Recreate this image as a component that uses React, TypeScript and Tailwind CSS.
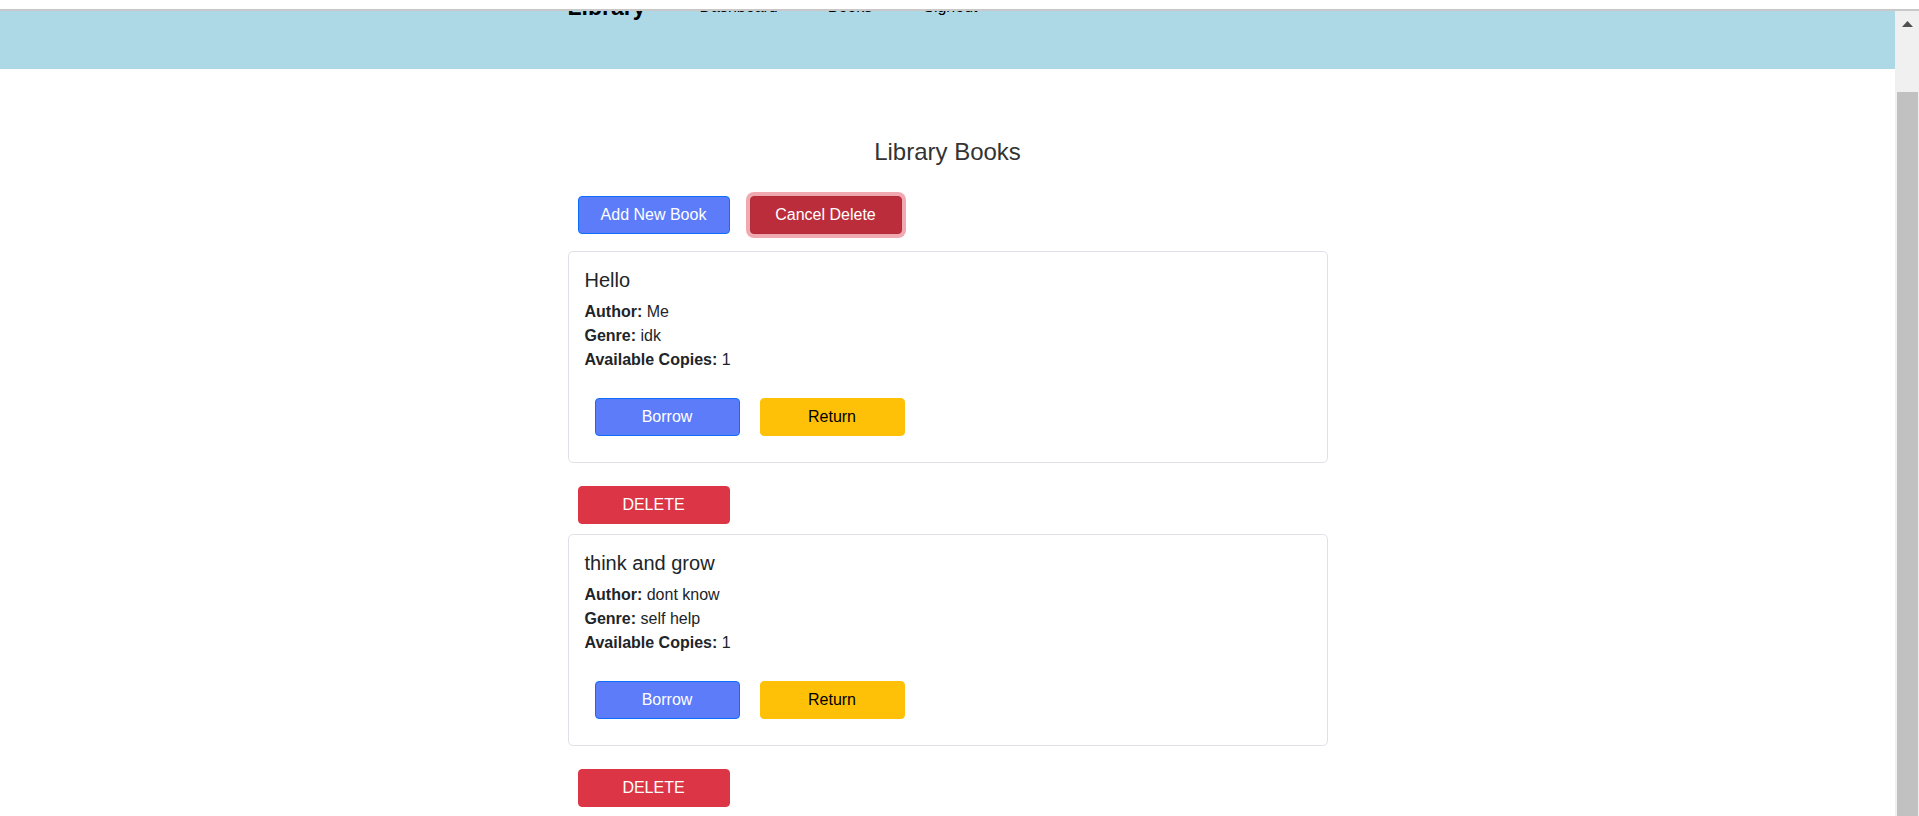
const books = [
  { title: "Hello", author: "Me", genre: "idk", copies: 1 },
  { title: "think and grow", author: "dont know", genre: "self help", copies: 1 },
];

const Navbar = () => {
  return (
    <nav className="h-[58px] overflow-hidden bg-[#add8e6]">
      <div className="mx-auto flex w-[760px] items-start text-black">
        <span className="-mt-[18px] text-[23px] font-bold leading-[28px]">Library</span>
        <a href="#" className="-mt-[16px] ml-[54px] text-[16px] leading-[24px]">
          Dashboard
        </a>
        <a href="#" className="-mt-[16px] ml-[50px] text-[16px] leading-[24px]">
          Books
        </a>
        <a href="#" className="-mt-[16px] ml-[51px] text-[16px] leading-[24px]">
          Signout
        </a>
      </div>
    </nav>
  );
};

const BookCard = ({ book }: { book: (typeof books)[number] }) => {
  return (
    <>
      <div className="mb-[13px] rounded-[5px] border border-[#dee2e6] p-[16px] text-[#212529]">
        <h5 className="mb-[8px] text-[20px] leading-[24px]">{book.title}</h5>
        <div className="mb-[16px] text-[16px] leading-[24px]">
          <div>
            <b>Author:</b> {book.author}
          </div>
          <div>
            <b>Genre:</b> {book.genre}
          </div>
          <div>
            <b>Available Copies:</b> {book.copies}
          </div>
        </div>
        <div className="flex">
          <button className="m-[10px] h-[38px] w-[145px] rounded-[4px] border border-[#0d6efd] bg-[#5c7cfa] text-[16px] text-white">
            Borrow
          </button>
          <button className="m-[10px] h-[38px] w-[145px] rounded-[4px] border border-[#ffc107] bg-[#ffc107] text-[16px] text-black">
            Return
          </button>
        </div>
      </div>
      <div className="px-[10px] py-[10px]">
        <button className="h-[38px] w-[152px] rounded-[4px] border border-[#dc3545] bg-[#dc3545] text-[16px] text-white">
          DELETE
        </button>
      </div>
    </>
  );
};

export default function App() {
  return (
    <div className="h-[816px] overflow-hidden bg-white font-['Liberation_Sans',Arial,sans-serif]">
      <div className="h-[9px] bg-white" />
      <div className="h-[2px] bg-[#c8c8c8]" />
      <div className="flex h-[805px]">
        <div className="min-w-0 flex-1">
          <Navbar />
          <main className="mx-auto w-[760px]">
            <h2 className="mt-[68px] text-center text-[24px] leading-[29px] text-[#333]">Library Books</h2>
            <div className="mt-[20px] flex">
              <button className="m-[10px] h-[38px] w-[152px] rounded-[4px] border border-[#0d6efd] bg-[#5c7cfa] text-[16px] text-white">
                Add New Book
              </button>
              <button className="m-[10px] h-[38px] w-[152px] rounded-[4px] border border-[#b02a37] bg-[#bb2d3b] text-[16px] text-white ring-4 ring-[rgba(225,83,97,0.5)]">
                Cancel Delete
              </button>
            </div>
            <div className="mt-[7px]">
              {books.map((b) => (
                <BookCard key={b.title} book={b} />
              ))}
            </div>
          </main>
        </div>
        <div className="flex w-[24px] flex-col bg-[#f0f0f0]">
          <div className="flex h-[81px] justify-center pt-[10px]">
            <svg width="11" height="6" viewBox="0 0 11 6">
              <polygon points="5.5,0 11,6 0,6" fill="#505050" />
            </svg>
          </div>
          <div className="ml-[2px] mr-[1px] flex-1 bg-[#c1c1c1]" />
        </div>
      </div>
    </div>
  );
}
